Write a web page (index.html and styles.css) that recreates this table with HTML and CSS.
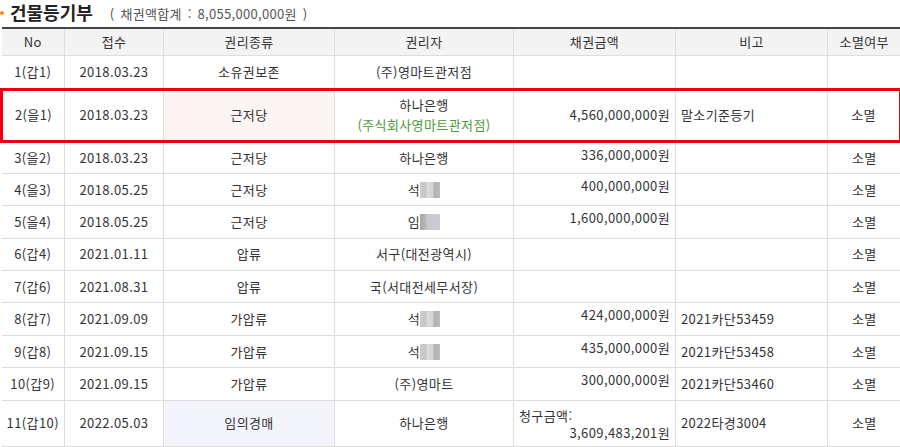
FILE: index.html
```html
<!DOCTYPE html>
<html lang="ko">
<head>
<meta charset="utf-8">
<link rel="stylesheet" href="styles.css">
</head>
<body>
<div class="title">
  <span class="bullet"></span>
  <span class="title-main">건물등기부</span>
  <span class="title-sub">( 채권액합계 : 8,055,000,000원 )</span>
</div>
<table class="reg">
  <colgroup>
    <col style="width:63px"><col style="width:99px"><col style="width:171px"><col style="width:179px"><col style="width:162px"><col style="width:152px"><col style="width:73px">
  </colgroup>
  <thead>
    <tr><th>No</th><th>접수</th><th>권리종류</th><th>권리자</th><th>채권금액</th><th>비고</th><th>소멸여부</th></tr>
  </thead>
  <tbody>
    <tr class="first"><td>1(갑1)</td><td>2018.03.23</td><td>소유권보존</td><td>(주)영마트관저점</td><td class="amt"></td><td class="note"></td><td></td></tr>
    <tr class="hl"><td>2(을1)</td><td>2018.03.23</td><td class="pink">근저당</td><td class="two">하나은행<br><span class="green">(주식회사영마트관저점)</span></td><td class="amt">4,560,000,000원</td><td class="note">말소기준등기</td><td>소멸</td></tr>
    <tr><td>3(을2)</td><td>2018.03.23</td><td>근저당</td><td>하나은행</td><td class="amt top">336,000,000원</td><td class="note"></td><td>소멸</td></tr>
    <tr><td>4(을3)</td><td>2018.05.25</td><td>근저당</td><td>석<span class="blur"></span></td><td class="amt top">400,000,000원</td><td class="note"></td><td>소멸</td></tr>
    <tr><td>5(을4)</td><td>2018.05.25</td><td>근저당</td><td>임<span class="blur b2"></span></td><td class="amt top">1,600,000,000원</td><td class="note"></td><td>소멸</td></tr>
    <tr><td>6(갑4)</td><td>2021.01.11</td><td>압류</td><td>서구(대전광역시)</td><td class="amt"></td><td class="note"></td><td>소멸</td></tr>
    <tr><td>7(갑6)</td><td>2021.08.31</td><td>압류</td><td>국(서대전세무서장)</td><td class="amt"></td><td class="note"></td><td>소멸</td></tr>
    <tr><td>8(갑7)</td><td>2021.09.09</td><td>가압류</td><td>석<span class="blur"></span></td><td class="amt top">424,000,000원</td><td class="note">2021카단53459</td><td>소멸</td></tr>
    <tr><td>9(갑8)</td><td>2021.09.15</td><td>가압류</td><td>석<span class="blur"></span></td><td class="amt top">435,000,000원</td><td class="note">2021카단53458</td><td>소멸</td></tr>
    <tr><td>10(갑9)</td><td>2021.09.15</td><td>가압류</td><td>(주)영마트</td><td class="amt top">300,000,000원</td><td class="note">2021카단53460</td><td>소멸</td></tr>
    <tr class="last"><td>11(갑10)</td><td>2022.05.03</td><td class="lav">임의경매</td><td>하나은행</td><td class="amt"><div class="claim-label">청구금액:</div><div>3,609,483,201원</div></td><td class="note">2022타경3004</td><td>소멸</td></tr>
  </tbody>
</table>
</body>
</html>
```
FILE: styles.css
```css
html, body {
  margin: 0;
  padding: 0;
  background: #fff;
}
body {
  font-family: "Noto Sans CJK KR", "Noto Sans", sans-serif;
  color: #333;
  width: 900px;
  overflow: hidden;
}
.title {
  height: 27px;
  display: flex;
  align-items: center;
  box-sizing: border-box;
  padding-bottom: 3px;
}
.bullet {
  width: 4px;
  height: 4px;
  border-radius: 50%;
  background: #f08a24;
  margin: 2px 6px 0 0;
}
.title-main {
  font-size: 18px;
  font-weight: 700;
  color: #222;
  line-height: 20px;
}
.title-sub {
  font-size: 13px;
  color: #555;
  margin-left: 17px;
  margin-top: 2px;
  letter-spacing: 0.3px;
  word-spacing: 2px;
}
.reg {
  border-collapse: collapse;
  table-layout: fixed;
  width: 899px;
  font-size: 13px;
  letter-spacing: 0.4px;
}
.reg th, .reg td {
  box-sizing: border-box;
  line-height: 16px;
  padding: 0 5px;
}
.reg th {
  height: 27px;
  background: #f3f3f3;
  font-weight: 400;
  color: #333;
  border-top: 2px solid #444;
  border-bottom: 1px solid #ddd;
  border-left: 1px solid #ddd;
  text-align: center;
}
.reg td {
  height: 32.4px;
  border: 1px solid #ddd;
  text-align: center;
  vertical-align: middle;
}
.reg tr.first td { height: 34px; }
.reg th:first-child, .reg td:first-child { border-left: none; }
.reg th:last-child, .reg td:last-child { border-right: none; }
.reg td.amt { text-align: right; }
.reg td.amt.top { vertical-align: top; padding-top: 4px; }
.reg td.note { text-align: left; }
.reg tr.hl td {
  height: 52px;
  border-top: 3px solid #e60012;
  border-bottom: 3px solid #e60012;
}
.reg tr.hl td:first-child { border-left: 3px solid #e60012; }
.reg tr.hl td:last-child { border-right: 3px solid #e60012; }
.reg tr.hl td.two { line-height: 20px; }
.reg td.pink { background: #fdf4f4; }
.reg td.lav { background: #f4f4fd; }
.green { color: #4a9a36; }
.blur {
  display: inline-block;
  width: 20px;
  height: 16px;
  vertical-align: top;
  background: linear-gradient(90deg, #c8c8c8 0, #bdbdbd 6px, #d6d6d6 7px, #cfcfcf 13px, #a8a8a8 14px, #b4b4b4 20px);
  opacity: 0.9;
}
.blur.b2 {
  background: linear-gradient(90deg, #a59e9a 0, #b5b0ad 6px, #c2c2ca 7px, #c6c6ce 20px);
}
.reg tr.last td { height: 46px; }
.claim-label { text-align: left; line-height: 19px; }
```
